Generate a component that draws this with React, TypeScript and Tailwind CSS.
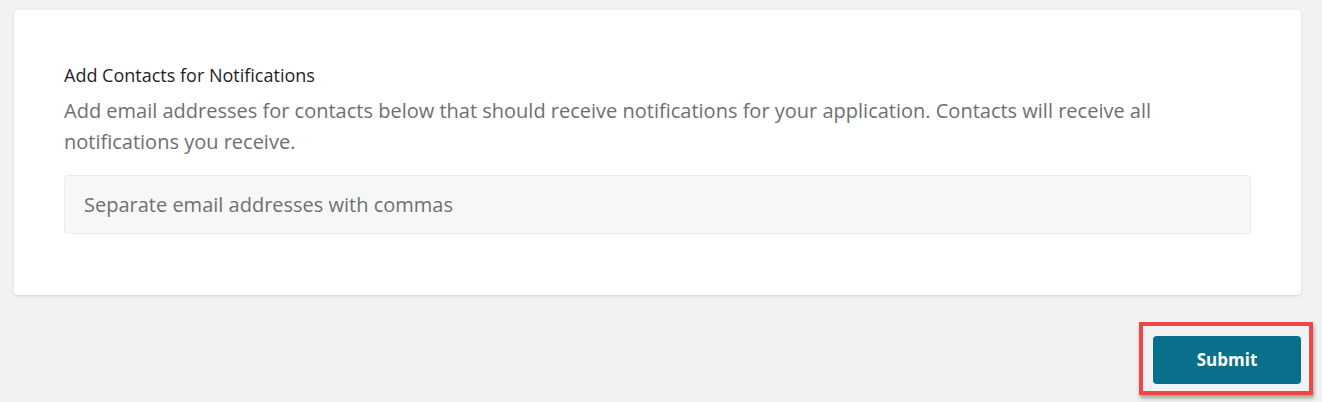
export default function App() {
  return (
    <div className="min-h-[402px] bg-[#f2f2f2] pt-[10px] pl-[14px] pr-[21px] font-['Open_Sans',sans-serif]">
      <div className="rounded-[4px] bg-white px-[50px] pt-[53px] pb-[61px] shadow-[0_1px_3px_rgba(0,0,0,0.12)]">
        <h2 className="text-[18px] leading-[24px] font-normal text-[#1f1f1f]">Add Contacts for Notifications</h2>
        <p className="mt-[8px] text-[20px] leading-[31px] text-[#6f6f6f]">
          Add email addresses for contacts below that should receive notifications for your application. Contacts will receive all notifications you receive.
        </p>
        <input
          type="text"
          placeholder="Separate email addresses with commas"
          className="mt-[18px] block h-[59px] w-full rounded-[4px] border border-[#ebebeb] bg-[#f7f7f7] px-[19px] text-[20px] text-[#333] placeholder:text-[#707070] outline-none"
        />
      </div>
      <div className="mt-[41px] flex justify-end">
        <div className="relative">
          <button className="h-[48px] w-[148px] rounded-[4px] bg-[#09708b] text-[17px] font-bold text-white">
            Submit
          </button>
          <div className="pointer-events-none absolute -left-[14px] -right-[12px] -top-[14px] -bottom-[11px] border-[4px] border-[#f04646] shadow-[1px_3px_4px_rgba(0,0,0,0.35)]" />
        </div>
      </div>
    </div>
  )
}
